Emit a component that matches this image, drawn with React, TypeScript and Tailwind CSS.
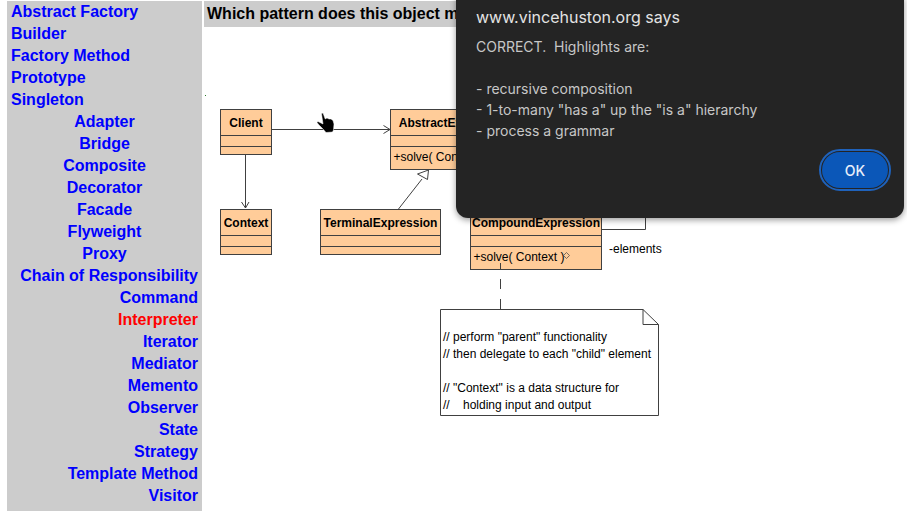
const creational = ["Abstract Factory", "Builder", "Factory Method", "Prototype", "Singleton"];
const structural = ["Adapter", "Bridge", "Composite", "Decorator", "Facade", "Flyweight", "Proxy"];
const behavioral = [
  "Chain of Responsibility",
  "Command",
  "Interpreter",
  "Iterator",
  "Mediator",
  "Memento",
  "Observer",
  "State",
  "Strategy",
  "Template Method",
  "Visitor",
];

function NavGroup({ items, align }: { items: string[]; align: string }) {
  return (
    <>
      {items.map((name) => (
        <a key={name} href="#" className={`block h-[22px] leading-[22px] ${align} ${name === "Interpreter" ? "text-[#ff0000]" : "text-[#0000ff]"}`}>
          {name}
        </a>
      ))}
    </>
  );
}

const LINE = "#404040";
const FILL = "#ffcc99";

function UmlClass({ x, y, w, h, name, div1, div2, method }: { x: number; y: number; w: number; h: number; name: string; div1: number; div2: number; method?: string }) {
  return (
    <g>
      <rect x={x} y={y} width={w} height={h} fill={FILL} stroke={LINE} />
      <line x1={x} x2={x + w} y1={div1} y2={div1} stroke={LINE} />
      <line x1={x} x2={x + w} y1={div2} y2={div2} stroke={LINE} />
      <text x={x + w / 2} y={y + 17} textAnchor="middle" fontWeight="700" fontSize="12" fill="#000">
        {name}
      </text>
      {method && (
        <text x={x + 3} y={div2 + 14} fontSize="12" fill="#000">
          {method}
        </text>
      )}
    </g>
  );
}

// class diagram, coordinates are relative to the page
function Diagram() {
  return (
    <svg width="907" height="513" viewBox="0 0 907 513" className="absolute left-0 top-0 font-['Liberation_Sans',Arial,sans-serif]">
      <rect x="205" y="95" width="1" height="1" fill="#2a7a2a" />
      <UmlClass x={220.5} y={109.5} w={51} h={45} name="Client" div1={135.5} div2={146.5} />
      <UmlClass x={390.5} y={109.5} w={130} h={60} name="AbstractExpression" div1={135.5} div2={146.5} method="+solve( Context )" />
      <UmlClass x={220.5} y={209.5} w={51} h={45} name="Context" div1={235.5} div2={246.5} />
      <UmlClass x={320.5} y={209.5} w={120} h={45} name="TerminalExpression" div1={235.5} div2={246.5} />
      <UmlClass x={470.5} y={209.5} w={131} h={60} name="CompoundExpression" div1={235.5} div2={246.5} method="+solve( Context )" />

      <g fill="none" stroke={LINE}>
        <path d="M272 129.5H390M383.5 125.5L390 129.5L383.5 133.5" />
        <path d="M245.5 155V208M241.5 202L245.5 208L249 202" />
        <path d="M398.5 209L422 179" />
        <path d="M417.5 174L428.5 170L427.5 179.5Z" fill="#fff" />
        <path d="M601.5 229.5H645.5V200" />
        <path d="M500.5 263V269M500.5 279V289M500.5 299V309" />
        <path d="M566.5 252.5L569.5 255.5L566.5 258.5L563.5 255.5Z" strokeWidth="0.7" />
        <path d="M440.5 309.5H643L658.5 324.5V415.5H440.5ZM643 309.5V324.5H658.5" fill="#fff" />
      </g>

      <text x="609" y="253" fontSize="12" fill="#000">-elements</text>
      <g fontSize="12" fill="#000">
        <text x="443" y="341">// perform "parent" functionality</text>
        <text x="443" y="358">// then delegate to each "child" element</text>
        <text x="443" y="392">// "Context" is a data structure for</text>
        <text x="443" y="409" xmlSpace="preserve">//    holding input and output</text>
      </g>

      {/* hand cursor */}
      <path
        d="M321.5 113.5L323 113L325 118.5L325 119L327 118L329 119L331 119L333 120.5L334 124L333.5 130L332.5 132L326 132.5L323 129L319 125L317 122.5L318 121.5L321 123L323 124Z"
        fill="#000"
        stroke="#fff"
        strokeWidth="0.5"
      />
    </svg>
  );
}

export default function App() {
  return (
    <div className="relative h-[513px] w-[907px] overflow-hidden bg-white font-['Liberation_Sans',Arial,sans-serif]">
      <Diagram />
      <div className="relative flex items-start pl-[7px] pt-px">
        <nav className="h-[510px] w-[195px] bg-[#cccccc] px-1 text-[16px] font-bold">
          <NavGroup items={creational} align="text-left" />
          <NavGroup items={structural} align="text-center" />
          <NavGroup items={behavioral} align="text-right" />
        </nav>
        <div className="ml-0.5 h-[26px] w-[252px] overflow-hidden whitespace-nowrap bg-[#cccccc] pl-[3px] text-[16px] font-bold leading-[26px] text-black">
          Which pattern does this object model represent?
        </div>
      </div>

      <div className="absolute left-[456px] top-[-4px] h-[222px] w-[448px] rounded-b-xl bg-[#242424] pl-5 pr-4 pt-[9px] font-['Inter',sans-serif] shadow-[0_2px_6px_rgba(0,0,0,0.4)]">
        <h2 className="text-[16px] leading-6 text-[#e3e3e3]">www.vincehuston.org says</h2>
        <p className="mt-[7px] whitespace-pre-wrap text-[14px] leading-[21px] text-[#c7c7c7]">
          {'CORRECT.  Highlights are:\n\n- recursive composition\n- 1-to-many "has a" up the "is a" hierarchy\n- process a grammar'}
        </p>
        <div className="mt-[11px] flex justify-end">
          <button className="h-9 w-[66px] rounded-full bg-[#0b57b8] text-[14px] font-medium text-[#e8eefa] outline-2 outline-offset-1 outline-[#1f62bb]">
            OK
          </button>
        </div>
      </div>
    </div>
  );
}
